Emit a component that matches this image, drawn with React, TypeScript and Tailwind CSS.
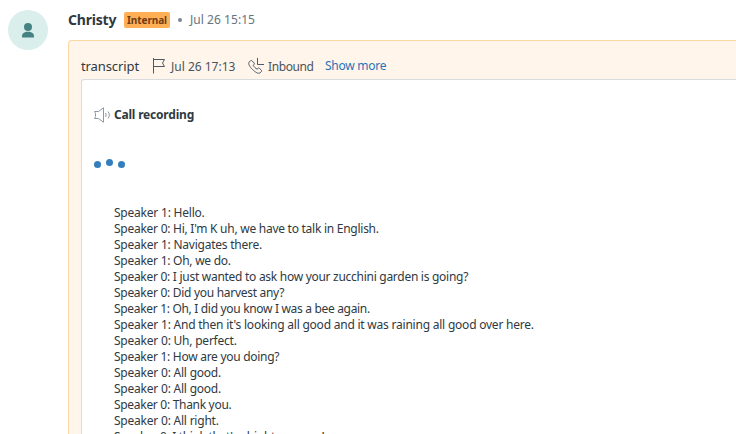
type TranscriptLine = {
  speaker: number;
  text: string;
  spacing: string;
};

const lines: TranscriptLine[] = [
  { speaker: 1, text: "Hello.", spacing: "tracking-[-0.22px]" },
  { speaker: 0, text: "Hi, I'm K uh, we have to talk in English.", spacing: "tracking-[-0.26px]" },
  { speaker: 1, text: "Navigates there.", spacing: "tracking-[-0.23px]" },
  { speaker: 1, text: "Oh, we do.", spacing: "tracking-[-0.26px]" },
  { speaker: 0, text: "I just wanted to ask how your zucchini garden is going?", spacing: "tracking-[-0.28px]" },
  { speaker: 0, text: "Did you harvest any?", spacing: "tracking-[-0.29px]" },
  { speaker: 1, text: "Oh, I did you know I was a bee again.", spacing: "tracking-[-0.32px]" },
  { speaker: 1, text: "And then it's looking all good and it was raining all good over here.", spacing: "tracking-[-0.22px]" },
  { speaker: 0, text: "Uh, perfect.", spacing: "tracking-[-0.22px]" },
  { speaker: 1, text: "How are you doing?", spacing: "tracking-[-0.28px]" },
  { speaker: 0, text: "All good.", spacing: "tracking-[-0.22px]" },
  { speaker: 0, text: "All good.", spacing: "tracking-[-0.22px]" },
  { speaker: 0, text: "Thank you.", spacing: "tracking-[-0.3px]" },
  { speaker: 0, text: "All right.", spacing: "tracking-[-0.22px]" },
  { speaker: 0, text: "I think that's alright, see you!", spacing: "tracking-[-0.34px]" },
];

const Avatar = () => (
  <div className="mt-2.5 flex h-10 w-10 shrink-0 items-center justify-center rounded-full bg-[#daeeec]">
    <svg className="h-4 w-3" viewBox="0 0 12 16" fill="#468283">
      <circle cx="6" cy="5" r="4" />
      <path d="M0 15.500v-1.200C0 11.400 2.300 9.800 6 9.800s6 1.600 6 4.500v1.200z" />
    </svg>
  </div>
);

const FlagIcon = () => (
  <svg className="h-4 w-[14px] shrink-0" viewBox="0 0 14 16" fill="none" stroke="#4f5a66">
    <path d="M1.500 0v15.500M1.500 1.500h11L10.500 5l2 3.500h-11" />
  </svg>
);

const InboundIcon = () => (
  <svg className="h-4 w-4 shrink-0" viewBox="0 0 16 16" fill="none" stroke="#4f5a66">
    <path d="M9.500 0v6.500H16" />
    <path d="M2.400 2.800 1.200 4c-1.300 1.600.4 4.700 3.300 7.500s5.900 4.600 7.600 3.300l1.300-1.200c.4-.4.4-1 0-1.400l-2-1.900c-.4-.4-1-.4-1.400 0l-.9.9C7.800 10.600 5.700 8.700 5.200 7.300l.9-.9c.4-.4.4-1 0-1.400L4 2.800c-.5-.5-1.100-.5-1.600 0z" />
  </svg>
);

const SpeakerIcon = () => (
  <svg className="h-4 w-4 shrink-0" viewBox="0 0 16 16" fill="none" stroke="#8c98a5">
    <path d="M.5 4.500h4L9.500.8v14.400l-5-3.700h-4l1-2v-3z" />
    <path d="M11.500 6c.8 1.300.8 2.700 0 4M14 4.500c1.800 2.200 1.800 4.800 0 7" />
  </svg>
);

const MessageHeader = () => (
  <div className="flex h-10 items-center text-[#68737d]">
    <span className="w-[49px] whitespace-nowrap text-sm font-bold tracking-[-0.2px] text-[#2f3941]">Christy</span>
    <span className="ml-[7px] flex h-4 w-[46px] items-center justify-center rounded-xs bg-[#ffb057] text-[10px] font-bold tracking-[-0.1px] text-[#703b15]">
      Internal
    </span>
    <span className="ml-2 h-1 w-1 rounded-full bg-[#7c8792]" />
    <span className="ml-2 whitespace-nowrap text-xs tracking-[0.05px]">Jul 26 15:15</span>
  </div>
);

const CallMeta = () => (
  <div className="flex h-6 items-center whitespace-nowrap text-xs text-[#49545c]">
    <span className="mt-0.5 w-[71px] text-[13px] tracking-[-0.1px] text-[#2f3941]">transcript</span>
    <FlagIcon />
    <span className="mt-0.5 ml-[5px] w-[77px]">Jul 26 17:13</span>
    <InboundIcon />
    <span className="mt-0.5 ml-1 w-[57px] tracking-[-0.4px]">Inbound</span>
    <a href="#" className="tracking-[-0.25px] text-[#1f73b7]">Show more</a>
  </div>
);

const LoadingDots = () => (
  <div className="mt-[34px] flex h-[10px] items-end gap-[5px]">
    <span className="h-[7px] w-[7px] rounded-full bg-[#337fbd]" />
    <span className="mb-[2px] h-[7px] w-[7px] rounded-full bg-[#337fbd]" />
    <span className="h-[7px] w-[7px] rounded-full bg-[#337fbd]" />
  </div>
);

export default function App() {
  return (
    <div className="flex h-[434px] w-[736px] overflow-hidden bg-white pl-2 font-['Noto_Sans',sans-serif] text-[#2f3941]">
      <Avatar />
      <main className="ml-5 min-w-0 flex-1">
        <MessageHeader />
        <section className="h-[500px] rounded-tl border-t border-l border-[#fcd6a3] bg-[#fff5eb] pt-[13px] pl-3">
          <CallMeta />
          <div className="mt-px h-[460px] rounded-tl-[3px] border-t border-l border-[#d8dcde] bg-white pl-3">
            <div className="mt-[26px] flex h-[18px] items-center text-xs font-bold">
              <SpeakerIcon />
              <h2 className="ml-1 whitespace-nowrap tracking-[-0.2px]">Call recording</h2>
            </div>
            <LoadingDots />
            <div className="mt-[37px] ml-5 text-xs leading-4">
              {lines.map((line, i) => (
                <p key={i} className={`h-4 w-max whitespace-nowrap ${line.spacing}`}>
                  Speaker {line.speaker}: {line.text}
                </p>
              ))}
            </div>
          </div>
        </section>
      </main>
    </div>
  );
}
